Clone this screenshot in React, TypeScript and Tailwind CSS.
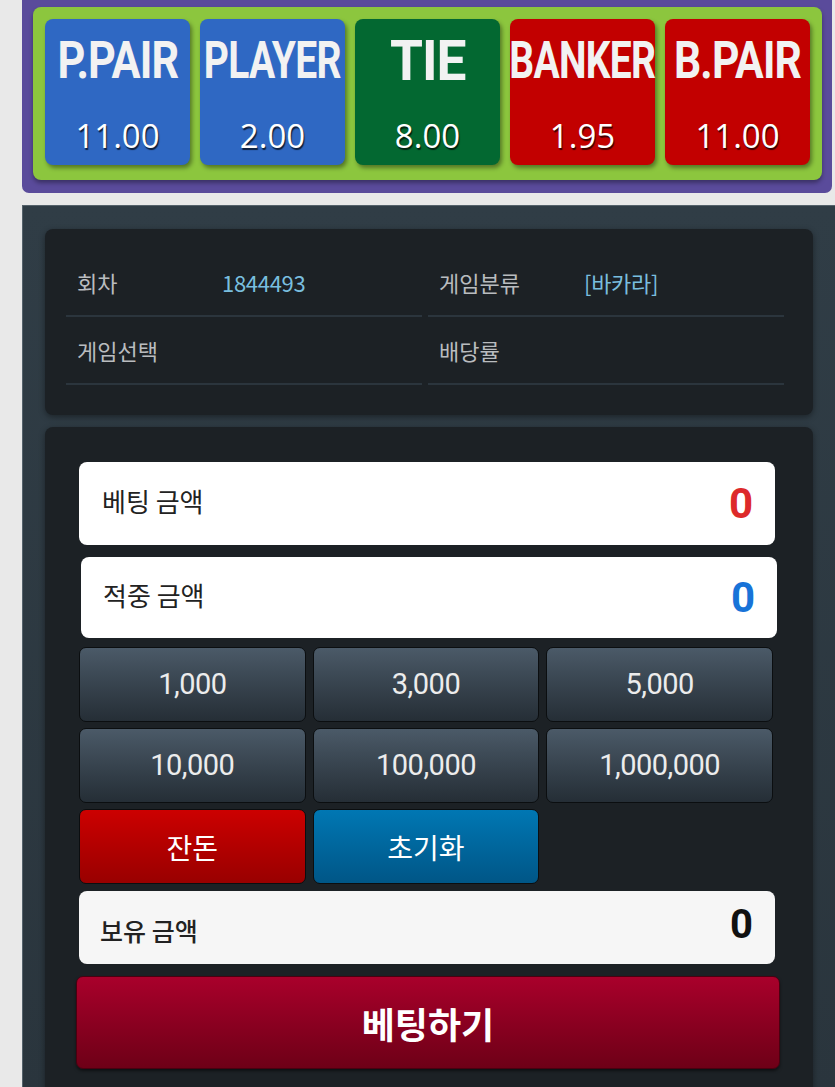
import React from 'react';

const odds = [
  { label: 'P.PAIR', value: '11.00', bg: 'bg-[#2f68c3]', scale: 'scale-x-[0.83]' },
  { label: 'PLAYER', value: '2.00', bg: 'bg-[#2f68c3]', scale: 'scale-x-[0.75]' },
  { label: 'TIE', value: '8.00', bg: 'bg-[#036831]', scale: 'scale-x-[0.95]' },
  { label: 'BANKER', value: '1.95', bg: 'bg-[#c20000]', scale: 'scale-x-[0.75]' },
  { label: 'B.PAIR', value: '11.00', bg: 'bg-[#c20000]', scale: 'scale-x-[0.82]' },
];

const amounts = ['1,000', '3,000', '5,000', '10,000', '100,000', '1,000,000'];

const InfoCell = ({ label, value }: { label: string; value?: string }) => (
  <div className="flex h-[68px] items-center border-b-2 border-[#2b353d] pl-[11px]">
    <span className="w-[145px] text-[22px] text-[#b9bcbf]">{label}</span>
    {value && <span className="text-[22px] text-[#79bedf] tracking-[-0.3px]">{value}</span>}
  </div>
);

export default function App() {
  return (
    <div
      className="min-h-[1087px] bg-[#e9e9e9] overflow-hidden"
      style={{ fontFamily: '"Noto Sans CJK KR", "Noto Sans", Roboto, sans-serif' }}
    >
      {/* Odds header */}
      <div className="ml-[22px] mr-[3px] rounded-b-[7px] bg-[#5a4b9b] px-[11px] pr-[10px] pt-[7px] pb-[13px]">
        <div className="flex gap-[10px] rounded-[8px] bg-[#8cc63e] px-[12px] pt-[12px] pb-[15px] shadow-[0_3px_4px_rgba(0,0,0,0.35)]">
          {odds.map((o) => (
            <div
              key={o.label}
              className={`${o.bg} flex h-[146px] w-[145px] flex-col items-center rounded-[8px] shadow-[2px_3px_4px_rgba(0,0,0,0.4)]`}
            >
              <div className="mt-[18px] flex h-[48px] w-full items-center justify-center overflow-visible">
                <span
                  className={`${o.label === 'TIE' ? 'text-[56px]' : 'text-[52px]'} ${o.scale} font-bold leading-none text-[#f2f2f2] whitespace-nowrap tracking-[-1px]`}
                  style={{ fontFamily: 'Roboto, sans-serif' }}
                >
                  {o.label}
                </span>
              </div>
              <span
                className="mt-[34px] text-[33px] leading-none text-white [text-shadow:1px_2px_1px_rgba(0,0,0,0.7)]"
                style={{ fontFamily: '"Open Sans", sans-serif' }}
              >
                {o.value}
              </span>
            </div>
          ))}
        </div>
      </div>

      {/* Main panel */}
      <div className="mt-[12px] ml-[22px] bg-linear-to-b from-[#303d46] to-[#2a353d] px-[22px] pt-[23px] border-l border-t border-[#55626b]">
        <div className="rounded-[8px] bg-[#1c2125] pl-[21px] pr-[29px] pt-[20px] pb-[30px] shadow-[0_2px_6px_rgba(0,0,0,0.4)]">
          <div className="grid grid-cols-2 gap-x-[6px]">
            <InfoCell label="회차" value="1844493" />
            <InfoCell label="게임분류" value="[바카라]" />
            <InfoCell label="게임선택" />
            <InfoCell label="배당률" />
          </div>
        </div>

        <div className="mt-[12px] rounded-t-[8px] bg-[#1c2125] pl-[34px] pr-[38px] pt-[35px] pb-[24px] shadow-[0_2px_6px_rgba(0,0,0,0.4)]">
          <div className="flex h-[83px] items-center justify-between rounded-[8px] bg-white pl-[23px] pr-[22px]">
            <span className="mb-[6px] text-[26px] text-[#222]">베팅 금액</span>
            <span className="text-[42px] font-bold leading-none text-[#dd2a2a]" style={{ fontFamily: 'Roboto, sans-serif' }}>0</span>
          </div>
          <div className="mt-[12px] ml-[2px] mr-[-2px] flex h-[81px] items-center justify-between rounded-[8px] bg-white pl-[22px] pr-[22px]">
            <span className="mb-[6px] text-[26px] text-[#222]">적중 금액</span>
            <span className="text-[42px] font-bold leading-none text-[#1873d8]" style={{ fontFamily: 'Roboto, sans-serif' }}>0</span>
          </div>

          <div className="mt-[9px] grid grid-cols-3 gap-x-[7px] gap-y-[6px] pr-[2px]" style={{ fontFamily: 'Roboto, sans-serif' }}>
            {amounts.map((a) => (
              <div
                key={a}
                className="flex h-[75px] items-center justify-center rounded-[7px] border border-[#0b0e10] bg-linear-to-b from-[#4b5a68] to-[#252e36] text-[29px] text-[#ececec] tracking-[-0.5px]"
              >
                {a}
              </div>
            ))}
            <div
              className="flex h-[75px] items-center justify-center rounded-[7px] border border-[#0b0e10] bg-linear-to-b from-[#cc0000] to-[#990000] text-[28px] text-white"
              style={{ fontFamily: '"Noto Sans CJK KR", sans-serif' }}
            >
              잔돈
            </div>
            <div
              className="flex h-[75px] items-center justify-center rounded-[7px] border border-[#0b0e10] bg-linear-to-b from-[#0077b3] to-[#005687] text-[28px] text-white"
              style={{ fontFamily: '"Noto Sans CJK KR", sans-serif' }}
            >
              초기화
            </div>
          </div>

          <div className="mt-[7px] flex h-[73px] items-center justify-between rounded-[8px] bg-[#f6f6f6] pl-[21px] pr-[22px]">
            <span className="mt-[6px] text-[25px] font-medium text-[#222]">보유 금액</span>
            <span className="mb-[6px] text-[40px] font-bold leading-none text-[#111]" style={{ fontFamily: 'Roboto, sans-serif' }}>0</span>
          </div>

          <div className="mt-[12px] ml-[-3px] flex h-[93px] w-[calc(100%+8px)] items-center justify-center rounded-[7px] border border-[#4a0010] bg-linear-to-b from-[#a9002b] to-[#6e0017] text-[36px] font-bold text-white shadow-[0_2px_3px_rgba(0,0,0,0.5)]">
            베팅하기
          </div>
        </div>
      </div>
    </div>
  );
}
